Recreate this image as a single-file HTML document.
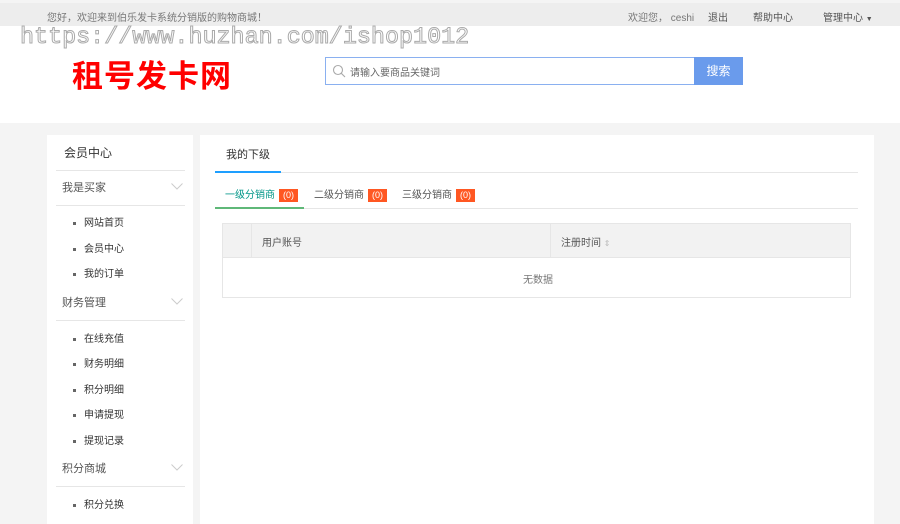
<!DOCTYPE html>
<html><head><meta charset="utf-8"><style>
*{margin:0;padding:0;box-sizing:border-box}
html,body{width:900px;height:524px;overflow:hidden}
body{background:#f4f4f4;font-family:"Liberation Sans","Noto Sans CJK SC",sans-serif;font-size:10px;color:#333;position:relative}
.a{position:absolute;white-space:nowrap}
.top{left:0;top:3px;width:900px;height:23px;background:#ededed}
.hdr{left:0;top:26px;width:900px;height:97px;background:#fff}
.wm{left:20px;top:25px;font-family:"Liberation Mono",monospace;font-size:23.4px;color:#fff;-webkit-text-stroke:1px #aaa}
.logo{left:72px;top:51px;font-size:31px;font-weight:bold;color:#f00;letter-spacing:1px;font-family:"Noto Sans CJK SC",sans-serif}
.sb{left:47px;top:135px;width:146px;height:389px;background:#fff}
.mn{left:200px;top:135px;width:674px;height:389px;background:#fff}
.ln{height:1px;background:#e6e6e6}
.it{left:73px;font-size:10px;color:#333}
.it:before{content:"";display:inline-block;width:3px;height:3px;background:#666;margin-right:8px;vertical-align:middle}
.gp{left:62px;font-size:11px;color:#555}
.chev{left:171px}
.bd{display:inline-block;background:#ff5722;color:#fff;font-size:9px;padding:1px 4px;margin-left:4px;line-height:11px}
</style></head><body>
<div class="a top"></div>
<div class="a" style="left:47px;top:9px;color:#777">您好，欢迎来到伯乐发卡系统分销版的购物商城！</div>
<div class="a" style="left:628px;top:9px;color:#777">欢迎您， ceshi</div>
<div class="a" style="left:708px;top:9px;color:#555">退出</div>
<div class="a" style="left:753px;top:9px;color:#555">帮助中心</div>
<div class="a" style="left:823px;top:9px;color:#555">管理中心 <span style="font-size:7px">▼</span></div>
<div class="a hdr"></div>
<div class="a wm">https://www.huzhan.com/ishop1012</div>
<div class="a logo">租号发卡网</div>
<div class="a" style="left:325px;top:57px;width:370px;height:28px;border:1px solid #8ab0f0;background:#fff"></div>
<svg class="a" style="left:332px;top:64px" width="14" height="14" viewBox="0 0 14 14"><circle cx="6" cy="6" r="4.5" fill="none" stroke="#aaa" stroke-width="1.1"/><path d="M9.3 9.3L13 13" stroke="#aaa" stroke-width="1.1"/></svg>
<div class="a" style="left:350px;top:64px;color:#666">请输入要商品关键词</div>
<div class="a" style="left:694px;top:57px;width:49px;height:28px;background:#6a9bec;color:#fff;font-size:12px;text-align:center;line-height:28px">搜索</div>

<div class="a sb"></div>
<div class="a" style="left:64px;top:144px;font-size:12px;color:#333">会员中心</div>
<div class="a ln" style="left:56px;top:170px;width:129px"></div>
<div class="a gp" style="top:179px">我是买家</div><svg class="a chev" style="top:183px" width="12" height="7"><path d="M0.5 0.5L6 6L11.5 0.5" fill="none" stroke="#ccc"/></svg>
<div class="a ln" style="left:56px;top:205px;width:129px"></div>
<div class="a it" style="top:214px">网站首页</div>
<div class="a it" style="top:240px">会员中心</div>
<div class="a it" style="top:265px">我的订单</div>
<div class="a gp" style="top:294px">财务管理</div><svg class="a chev" style="top:298px" width="12" height="7"><path d="M0.5 0.5L6 6L11.5 0.5" fill="none" stroke="#ccc"/></svg>
<div class="a ln" style="left:56px;top:320px;width:129px"></div>
<div class="a it" style="top:330px">在线充值</div>
<div class="a it" style="top:355px">财务明细</div>
<div class="a it" style="top:381px">积分明细</div>
<div class="a it" style="top:406px">申请提现</div>
<div class="a it" style="top:432px">提现记录</div>
<div class="a gp" style="top:460px">积分商城</div><svg class="a chev" style="top:464px" width="12" height="7"><path d="M0.5 0.5L6 6L11.5 0.5" fill="none" stroke="#ccc"/></svg>
<div class="a ln" style="left:56px;top:486px;width:129px"></div>
<div class="a it" style="top:496px">积分兑换</div>

<div class="a mn"></div>
<div class="a" style="left:226px;top:146px;font-size:11px;color:#333">我的下级</div>
<div class="a ln" style="left:215px;top:172px;width:643px"></div>
<div class="a" style="left:215px;top:171px;width:66px;height:2px;background:#1e9fff"></div>
<div class="a" style="left:225px;top:186px;color:#009688">一级分销商<span class="bd">(0)</span></div>
<div class="a" style="left:314px;top:186px;color:#555">二级分销商<span class="bd">(0)</span></div>
<div class="a" style="left:402px;top:186px;color:#555">三级分销商<span class="bd">(0)</span></div>
<div class="a ln" style="left:215px;top:208px;width:643px"></div>
<div class="a" style="left:215px;top:207px;width:89px;height:2px;background:#5fb878"></div>
<div class="a" style="left:222px;top:223px;width:629px;height:75px;border:1px solid #e6e6e6;background:#fff"></div>
<div class="a" style="left:223px;top:224px;width:627px;height:34px;background:#f2f2f2;border-bottom:1px solid #e6e6e6"></div>
<div class="a" style="left:251px;top:224px;width:1px;height:34px;background:#e6e6e6"></div>
<div class="a" style="left:550px;top:224px;width:1px;height:34px;background:#e6e6e6"></div>
<div class="a" style="left:262px;top:234px;color:#555">用户账号</div>
<div class="a" style="left:561px;top:234px;color:#555">注册时间 <span style="color:#bbb;font-size:8px">⇕</span></div>
<div class="a" style="left:523px;top:271px;color:#777">无数据</div>
</body></html>
